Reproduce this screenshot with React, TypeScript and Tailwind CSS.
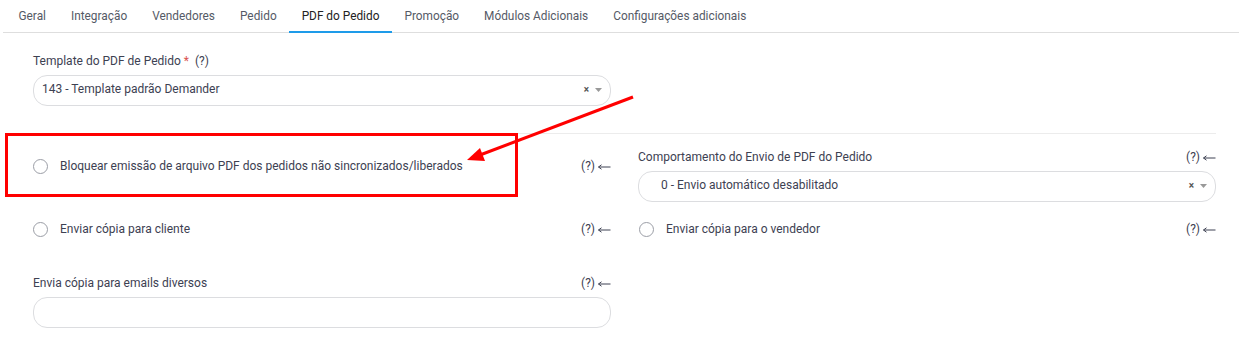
import { useState } from 'react'

const tabs = ['Geral', 'Integração', 'Vendedores', 'Pedido', 'PDF do Pedido', 'Promoção', 'Módulos Adicionais', 'Configurações adicionais']

const Help = () => (
  <span className="flex items-center gap-[3px] text-[12px] text-[#3d4152] whitespace-nowrap">
    (?)
    <svg width="13" height="6" viewBox="0 0 13 6" className="mt-[1px]">
      <path d="M0.5 3 H12.5 M0.5 3 L3.5 0.8 M0.5 3 L3.5 5.2" stroke="#3d4152" strokeWidth="1" fill="none" />
    </svg>
  </span>
)

const Radio = ({ label }: { label: string }) => (
  <label className="flex items-center gap-[12px]">
    <span className="w-[15px] h-[15px] rounded-full border border-[#9b9ea6] bg-white shrink-0" />
    <span className="text-[12px] text-[#3d4152]">{label}</span>
  </label>
)

const SelectBox = ({ value, indent }: { value: string; indent?: boolean }) => (
  <div className={`h-[31px] rounded-[14px] border border-[#dcdde0] flex items-center justify-between pr-[8px] ${indent ? 'pl-[22px]' : 'pl-[8px]'}`}>
    <span className="text-[12px] text-[#3d4152] pb-[3px]">{value}</span>
    <span className="flex items-center gap-[6px] text-[#555] pb-[2px]">
      <span className="text-[10px] font-bold leading-none">×</span>
      <svg width="7" height="4" viewBox="0 0 7 4"><path d="M0 0 H7 L3.5 4 Z" fill="#999" /></svg>
    </span>
  </div>
)

const App = () => {
  const [active, setActive] = useState('PDF do Pedido')

  return (
    <div className="relative w-[1239px] h-[345px] bg-white overflow-hidden" style={{ fontFamily: 'Roboto, "Liberation Sans", sans-serif' }}>
      {/* Tabs */}
      <div className="ml-[3px] flex border-b border-[#dedede] h-[33px] pl-[3px]">
        {tabs.map(t => (
          <button
            key={t}
            onClick={() => setActive(t)}
            className={`px-[12.5px] pt-[2px] text-[11.85px] h-[33px] -mb-px border-b-2 ${
              active === t ? 'border-[#1e9be9] text-[#222]' : 'border-transparent text-[#555a66]'
            }`}
          >
            {t}
          </button>
        ))}
      </div>

      <div className="pl-[33px] pr-[23px]">
        {/* Template */}
        <div className="w-[578px] pt-[20px]">
          <div className="text-[12px] text-[#3d4152] mb-[6px] h-[16px] leading-[16px]">
            Template do PDF de Pedido <span className="text-[#d9534f]">*</span>&nbsp; (?)
          </div>
          <SelectBox value="143 - Template padrão Demander" />
        </div>

        <div className="mt-[27px] border-t border-[#ececec]" />

        <div className="grid grid-cols-2 gap-x-[27px]">
          {/* left column */}
          <div className="pt-[24px]">
            <div className="h-[16px] flex items-center justify-between">
              <Radio label="Bloquear emissão de arquivo PDF dos pedidos não sincronizados/liberados" />
              <Help />
            </div>
          </div>
          {/* right column */}
          <div className="pt-[15px]">
            <div className="flex items-center justify-between h-[16px] mb-[6px]">
              <span className="text-[12px] text-[#3d4152]">Comportamento do Envio de PDF do Pedido</span>
              <Help />
            </div>
            <SelectBox value="0 - Envio automático desabilitado" indent />
          </div>

          <div className="flex items-center justify-between h-[30px] mt-[12px]">
            <Radio label="Enviar cópia para cliente" />
            <Help />
          </div>
          <div className="flex items-center justify-between h-[30px] mt-[12px] pl-[1px]">
            <Radio label="Enviar cópia para o vendedor" />
            <Help />
          </div>

          <div className="pt-[31px]">
            <div className="flex items-center justify-between h-[16px] mb-[6px]">
              <span className="text-[12px] text-[#3d4152]">Envia cópia para emails diversos</span>
              <Help />
            </div>
            <div className="h-[31px] rounded-[14px] border border-[#dcdde0]" />
          </div>
        </div>
      </div>

      {/* annotation: red box */}
      <div className="absolute left-[5px] top-[133px] w-[513px] h-[64px] border-[3px] border-[#ff0000] pointer-events-none" />
      {/* annotation: arrow */}
      <svg className="absolute left-0 top-0 pointer-events-none" width="1239" height="345">
        <line x1="633" y1="97" x2="480" y2="155" stroke="#ff0000" strokeWidth="3" />
        <path d="M467 160 L480 148 L485 161 Z" fill="#ff0000" />
      </svg>
    </div>
  )
}

export default App
